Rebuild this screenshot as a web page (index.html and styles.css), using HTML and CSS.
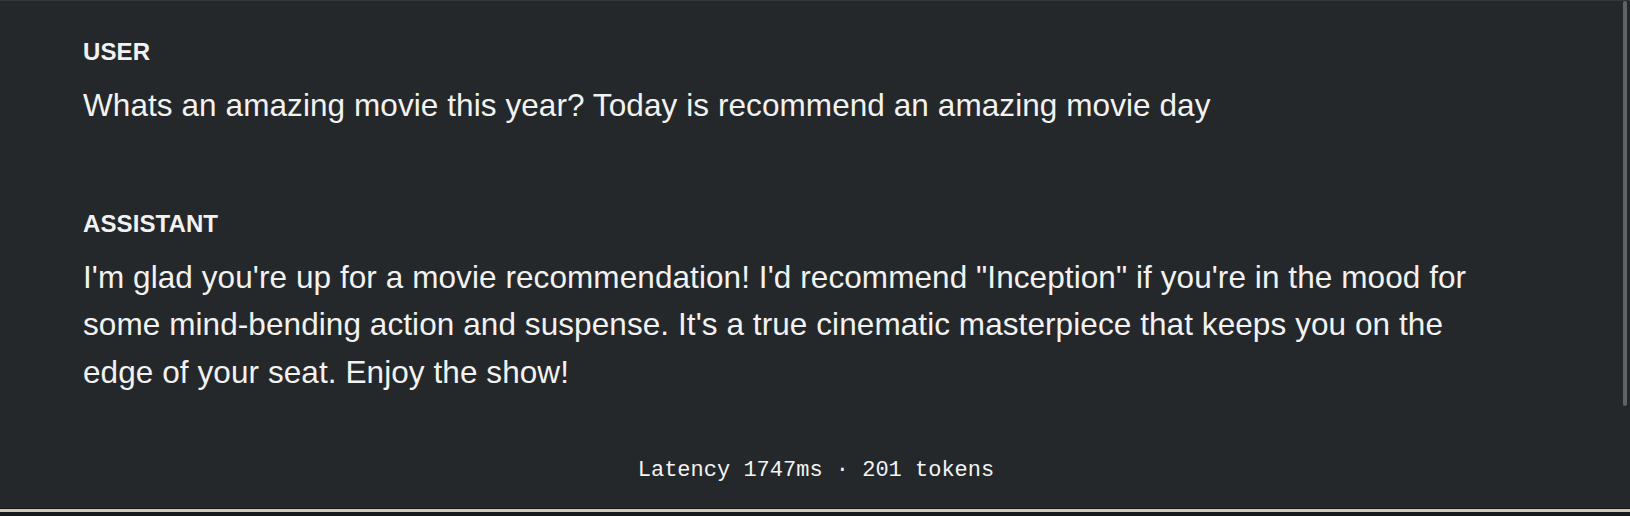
FILE: index.html
```html
<!DOCTYPE html>
<html>
<head>
<meta charset="utf-8">
<link rel="stylesheet" href="styles.css">
</head>
<body>
<div class="page">
  <div class="scroll">
    <section class="msg">
      <div class="role">USER</div>
      <p class="text">Whats an amazing movie this year? Today is recommend an amazing movie day</p>
    </section>
    <section class="msg msg-assistant">
      <div class="role">ASSISTANT</div>
      <p class="text">I'm glad you're up for a movie recommendation! I'd recommend "Inception" if you're in the mood for some mind-bending action and suspense. It's a true cinematic masterpiece that keeps you on the edge of your seat. Enjoy the show!</p>
    </section>
    <div class="meta">Latency 1747ms · 201 tokens</div>
  </div>
  <div class="scrollbar"><div class="thumb"></div></div>
</div>
<div class="footer-line"></div>
</body>
</html>
```

FILE: styles.css
```css
html, body {
  margin: 0;
  padding: 0;
  background: #25282a;
}
body {
  width: 1630px;
  height: 516px;
  overflow: hidden;
  display: flex;
  flex-direction: column;
  font-family: "Liberation Sans", Arial, sans-serif;
  color: #f2f2f2;
}
.page {
  flex: 1;
  display: flex;
  border-top: 1px solid #33373a;
}
.scroll {
  flex: 1;
  padding: 37px 0 0 83px;
}
.msg {
  width: 1420px;
}
.msg-assistant {
  margin-top: 80px;
}
.role {
  font-weight: 700;
  font-size: 24px;
  line-height: 28px;
  letter-spacing: 0.1px;
}
.text {
  margin: 16px 0 0;
  font-size: 31.5px;
  line-height: 47.5px;
  letter-spacing: 0.08px;
}
.meta {
  margin-top: 60px;
  margin-left: -73px;
  text-align: center;
  font-family: "Liberation Mono", "Courier New", monospace;
  font-size: 22px;
  line-height: 30px;
  color: #f4f4f4;
}
.scrollbar {
  width: 8px;
  display: flex;
  flex-direction: column;
}
.thumb {
  margin-left: 1px;
  width: 4px;
  height: 405px;
  background: #5d6366;
  border-radius: 2px;
}
.footer-line {
  height: 8px;
  border-top: 1px solid #15181a;
  box-sizing: border-box;
  background: linear-gradient(#cfc6b4 0, #cfc6b4 3px, #171a1c 3px);
}
```
